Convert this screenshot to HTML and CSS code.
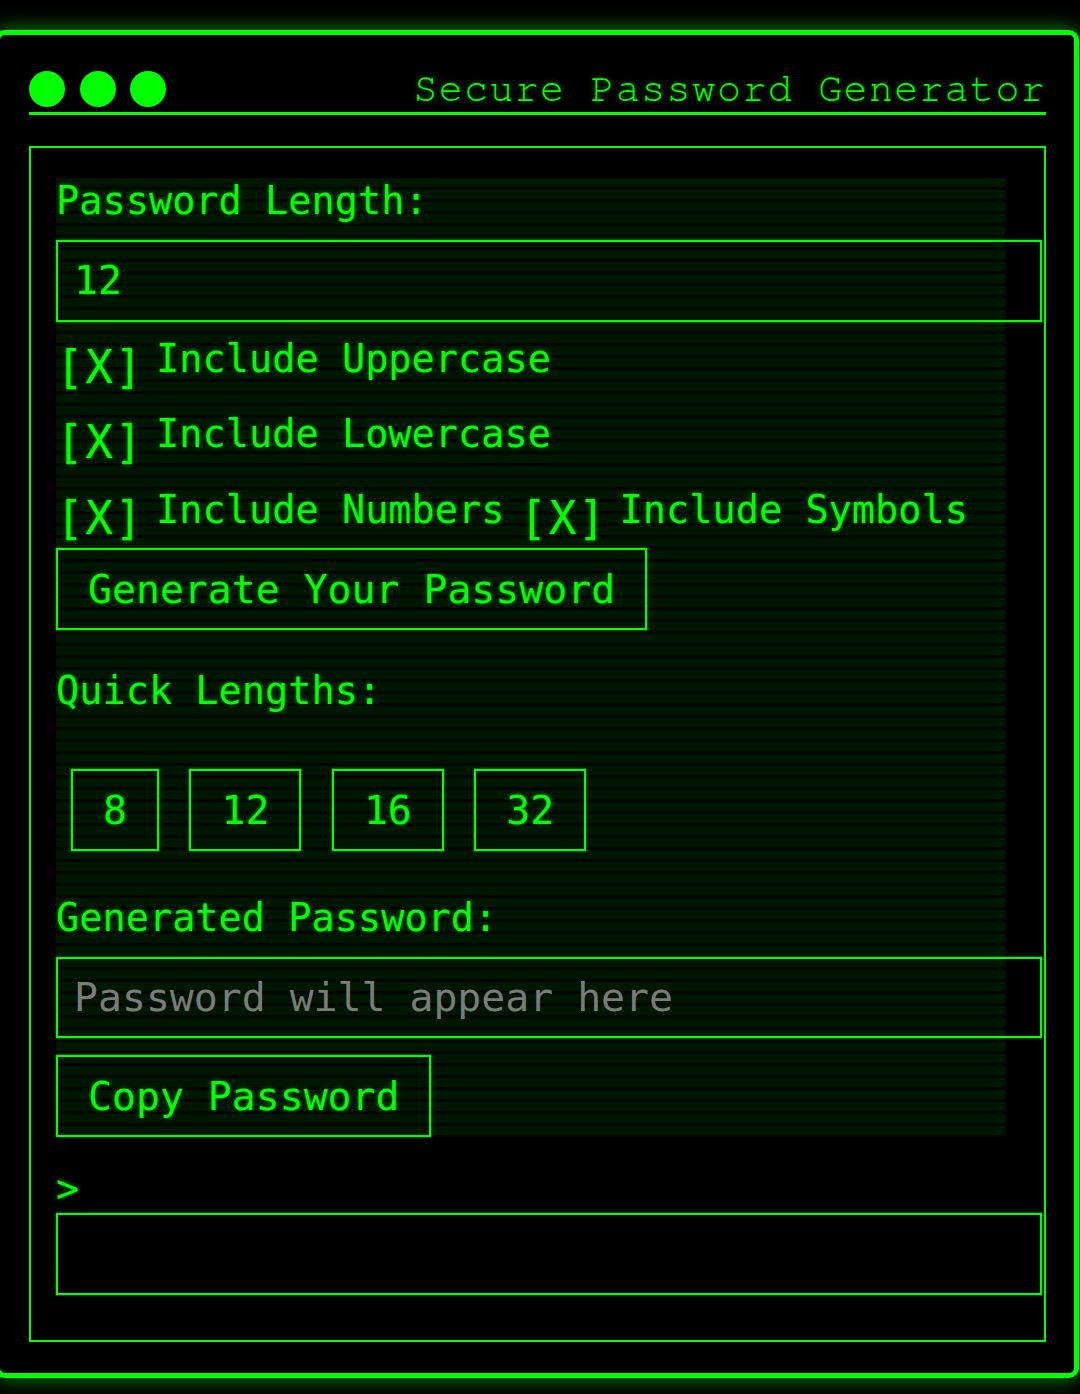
FILE: index.html
```html
<!DOCTYPE html>
<html lang="en">
<head>
<meta charset="utf-8">
<title>Secure Password Generator</title>
<link rel="stylesheet" href="styles.css">
</head>
<body>
<div class="terminal">
  <header class="titlebar">
    <div class="dots"><span class="dot"></span><span class="dot"></span><span class="dot"></span></div>
    <h1 class="title">Secure Password Generator</h1>
  </header>
  <main class="panel">
    <form class="generator">
      <label class="field-label" for="length">Password Length:</label>
      <input class="field" id="length" type="text" value="12">
      <div class="options">
        <label class="option"><span class="check">[X]</span>Include Uppercase</label>
        <label class="option"><span class="check">[X]</span>Include Lowercase</label>
        <label class="option"><span class="check">[X]</span>Include Numbers</label>
        <label class="option"><span class="check">[X]</span>Include Symbols</label>
      </div>
      <button type="button" class="btn btn-generate">Generate Your Password</button>
      <p class="section-label">Quick Lengths:</p>
      <div class="quick">
        <button type="button" class="btn">8</button>
        <button type="button" class="btn">12</button>
        <button type="button" class="btn">16</button>
        <button type="button" class="btn">32</button>
      </div>
      <label class="field-label field-label-result" for="result">Generated Password:</label>
      <input class="field" id="result" type="text" readonly placeholder="Password will appear here">
      <button type="button" class="btn btn-copy">Copy Password</button>
    </form>
    <div class="console">
      <div class="prompt">&gt;</div>
      <div class="field console-out"></div>
    </div>
  </main>
</div>
</body>
</html>
```
FILE: styles.css
```css
html, body {
  margin: 0;
  background: #000;
}
body {
  font-family: "DejaVu Sans Mono", monospace;
  font-size: 38.6px;
  color: #00ff00;
  min-height: 1394px;
  overflow: hidden;
}
.terminal {
  box-sizing: border-box;
  width: 1084px;
  margin: 30px 0 0 -5px;
  border: 5px solid #00ff00;
  border-radius: 10px;
  padding: 36px 28px 31px 29px;
  box-shadow: 0 0 22px rgba(0, 255, 0, 0.55);
}
.titlebar {
  display: flex;
  justify-content: space-between;
  align-items: center;
  padding-bottom: 5px;
  border-bottom: 3px solid #00ff00;
  margin-bottom: 31px;
}
.dots {
  display: flex;
  gap: 14.5px;
}
.dot {
  width: 36px;
  height: 36px;
  border-radius: 50%;
  background: #00ff00;
}
.title {
  margin: 0;
  font-family: "Nimbus Mono PS", "Nimbus Mono L", "FreeMono", "Courier", "Courier New", monospace;
  font-weight: 400;
  font-size: 40px;
  line-height: 36px;
  letter-spacing: 1.3px;
  text-shadow: 0 0 6px rgba(0, 255, 0, 0.4);
}
.panel {
  display: block;
  border: 2px solid #00ff00;
  padding: 30px 38px 45px 25px;
}
.generator {
  margin: 0;
  background: repeating-linear-gradient(180deg, #001600 0px, #001600 9px, #000700 9px, #000700 12px);
  text-shadow: 0 0 5px rgba(0, 255, 0, 0.38);
}
.field-label {
  display: block;
  line-height: 45px;
  margin-bottom: 17px;
}
.field-label-result {
  margin-top: 44px;
}
.field {
  display: block;
  box-sizing: content-box;
  width: 100%;
  margin: 0;
  padding: 16px;
  border: 2px solid #00ff00;
  background: transparent;
  color: #00ff00;
  font-family: inherit;
  font-size: 39.8px;
  line-height: 45.5px;
  outline: none;
  text-shadow: inherit;
  box-shadow: 0 0 2px rgba(0, 255, 0, 0.7);
}
.field::placeholder {
  color: #777d77;
  opacity: 1;
  text-shadow: none;
}
.options {
  display: flex;
  flex-wrap: wrap;
  column-gap: 15px;
  row-gap: 17.5px;
  margin-top: 14.4px;
  line-height: normal;
}
.option {
  white-space: nowrap;
}
.check {
  font-size: 46px;
  letter-spacing: 1.5px;
  vertical-align: -11px;
  margin-right: 12.5px;
}
.btn {
  display: block;
  width: fit-content;
  margin: 0;
  padding: 16px 30px;
  border: 2px solid #00ff00;
  background: transparent;
  color: #00ff00;
  font-family: inherit;
  font-size: 39.8px;
  line-height: 46px;
  text-shadow: inherit;
  box-shadow: 0 0 2px rgba(0, 255, 0, 0.7);
}
.btn-generate {
  margin-top: 3px;
}
.btn-copy {
  margin-top: 17px;
}
.section-label {
  margin: 38px 0 0;
  line-height: 45px;
}
.quick {
  display: flex;
  gap: 30.5px;
  margin-top: 56px;
  padding-left: 15px;
}
.console {
  margin-top: 29px;
}
.prompt {
  line-height: 45px;
  margin-bottom: 2px;
  text-shadow: 0 0 5px rgba(0, 255, 0, 0.45);
}
.console-out {
  height: 46px;
}
```
